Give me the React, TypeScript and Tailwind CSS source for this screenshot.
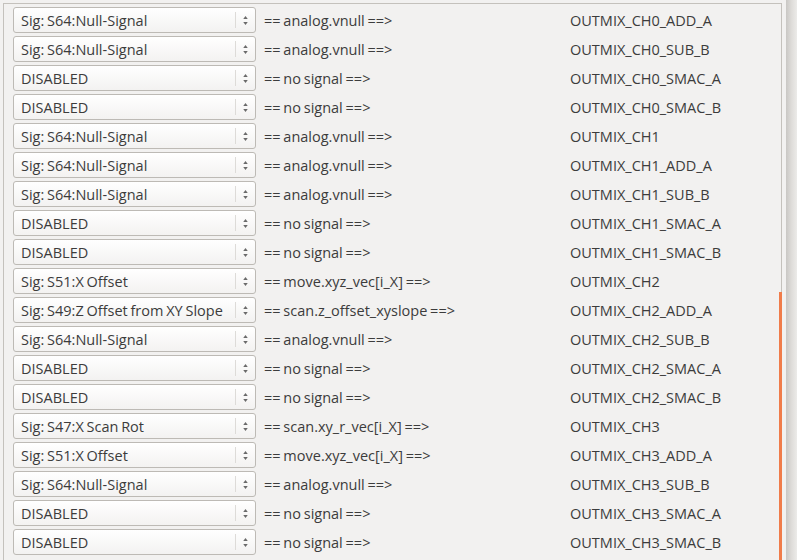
import React from 'react';

type Row = { sig: string; src: string; out: string };

const NULL_SIG = 'Sig: S64:Null-Signal';
const VNULL = '== analog.vnull ==>';
const NONE = '== no signal ==>';

const rows: Row[] = [
  { sig: NULL_SIG, src: VNULL, out: 'OUTMIX_CH0_ADD_A' },
  { sig: NULL_SIG, src: VNULL, out: 'OUTMIX_CH0_SUB_B' },
  { sig: 'DISABLED', src: NONE, out: 'OUTMIX_CH0_SMAC_A' },
  { sig: 'DISABLED', src: NONE, out: 'OUTMIX_CH0_SMAC_B' },
  { sig: NULL_SIG, src: VNULL, out: 'OUTMIX_CH1' },
  { sig: NULL_SIG, src: VNULL, out: 'OUTMIX_CH1_ADD_A' },
  { sig: NULL_SIG, src: VNULL, out: 'OUTMIX_CH1_SUB_B' },
  { sig: 'DISABLED', src: NONE, out: 'OUTMIX_CH1_SMAC_A' },
  { sig: 'DISABLED', src: NONE, out: 'OUTMIX_CH1_SMAC_B' },
  { sig: 'Sig: S51:X Offset', src: '== move.xyz_vec[i_X] ==>', out: 'OUTMIX_CH2' },
  { sig: 'Sig: S49:Z Offset from XY Slope', src: '== scan.z_offset_xyslope ==>', out: 'OUTMIX_CH2_ADD_A' },
  { sig: NULL_SIG, src: VNULL, out: 'OUTMIX_CH2_SUB_B' },
  { sig: 'DISABLED', src: NONE, out: 'OUTMIX_CH2_SMAC_A' },
  { sig: 'DISABLED', src: NONE, out: 'OUTMIX_CH2_SMAC_B' },
  { sig: 'Sig: S47:X Scan Rot', src: '== scan.xy_r_vec[i_X] ==>', out: 'OUTMIX_CH3' },
  { sig: 'Sig: S51:X Offset', src: '== move.xyz_vec[i_X] ==>', out: 'OUTMIX_CH3_ADD_A' },
  { sig: NULL_SIG, src: VNULL, out: 'OUTMIX_CH3_SUB_B' },
  { sig: 'DISABLED', src: NONE, out: 'OUTMIX_CH3_SMAC_A' },
  { sig: 'DISABLED', src: NONE, out: 'OUTMIX_CH3_SMAC_B' },
];

const Combo: React.FC<{ value: string }> = ({ value }) => (
  <div className="flex h-[26px] w-[243px] shrink-0 items-center rounded-[3px] border border-[#bdbab5] bg-gradient-to-b from-[#ffffff] to-[#f3f2f1]">
    <span className="flex-1 overflow-hidden whitespace-nowrap pl-[7px] pt-[2px]">{value}</span>
    <div className="h-[16px] w-px bg-[#dddbd8]" />
    <div className="flex w-[19px] flex-col items-center justify-center gap-[3px]">
      <svg width="5" height="3" viewBox="0 0 6 4"><path d="M3 0 L6 4 L0 4 Z" fill="#6a6a6a" /></svg>
      <svg width="5" height="3" viewBox="0 0 6 4"><path d="M0 0 L6 0 L3 4 Z" fill="#6a6a6a" /></svg>
    </div>
  </div>
);

export default function App() {
  return (
    <div
      className="flex h-[560px] w-[797px] overflow-hidden bg-[#f2f1f0] text-[14.5px] text-[#3c3c3c] [word-spacing:-1px]"
      style={{ fontFamily: '"Open Sans", "DejaVu Sans", sans-serif' }}
    >
      <div className="flex-1 pl-[3px] pt-[3px]">
        <div className="relative h-[600px] w-[779px] border-l border-t border-r border-[#c4c1bc]">
          <div className="flex flex-col gap-[3px] pl-[9px] pt-[3px]">
            {rows.map((r, i) => (
              <div key={i} className="flex h-[26px] items-center">
                <Combo value={r.sig} />
                <span className="w-[314px] shrink-0 whitespace-nowrap pl-[8px] pt-[2px]">{r.src}</span>
                <span className="whitespace-nowrap pt-[2px]">{r.out}</span>
              </div>
            ))}
          </div>
          <div className="absolute right-[-1px] top-[288px] h-[320px] w-[3px] bg-[#f07c4a]" />
        </div>
      </div>
      <div className="h-full w-[11px] bg-gradient-to-r from-[#c9c7c4] via-[#dedcd9] to-[#ecebe9]" />
    </div>
  );
}
